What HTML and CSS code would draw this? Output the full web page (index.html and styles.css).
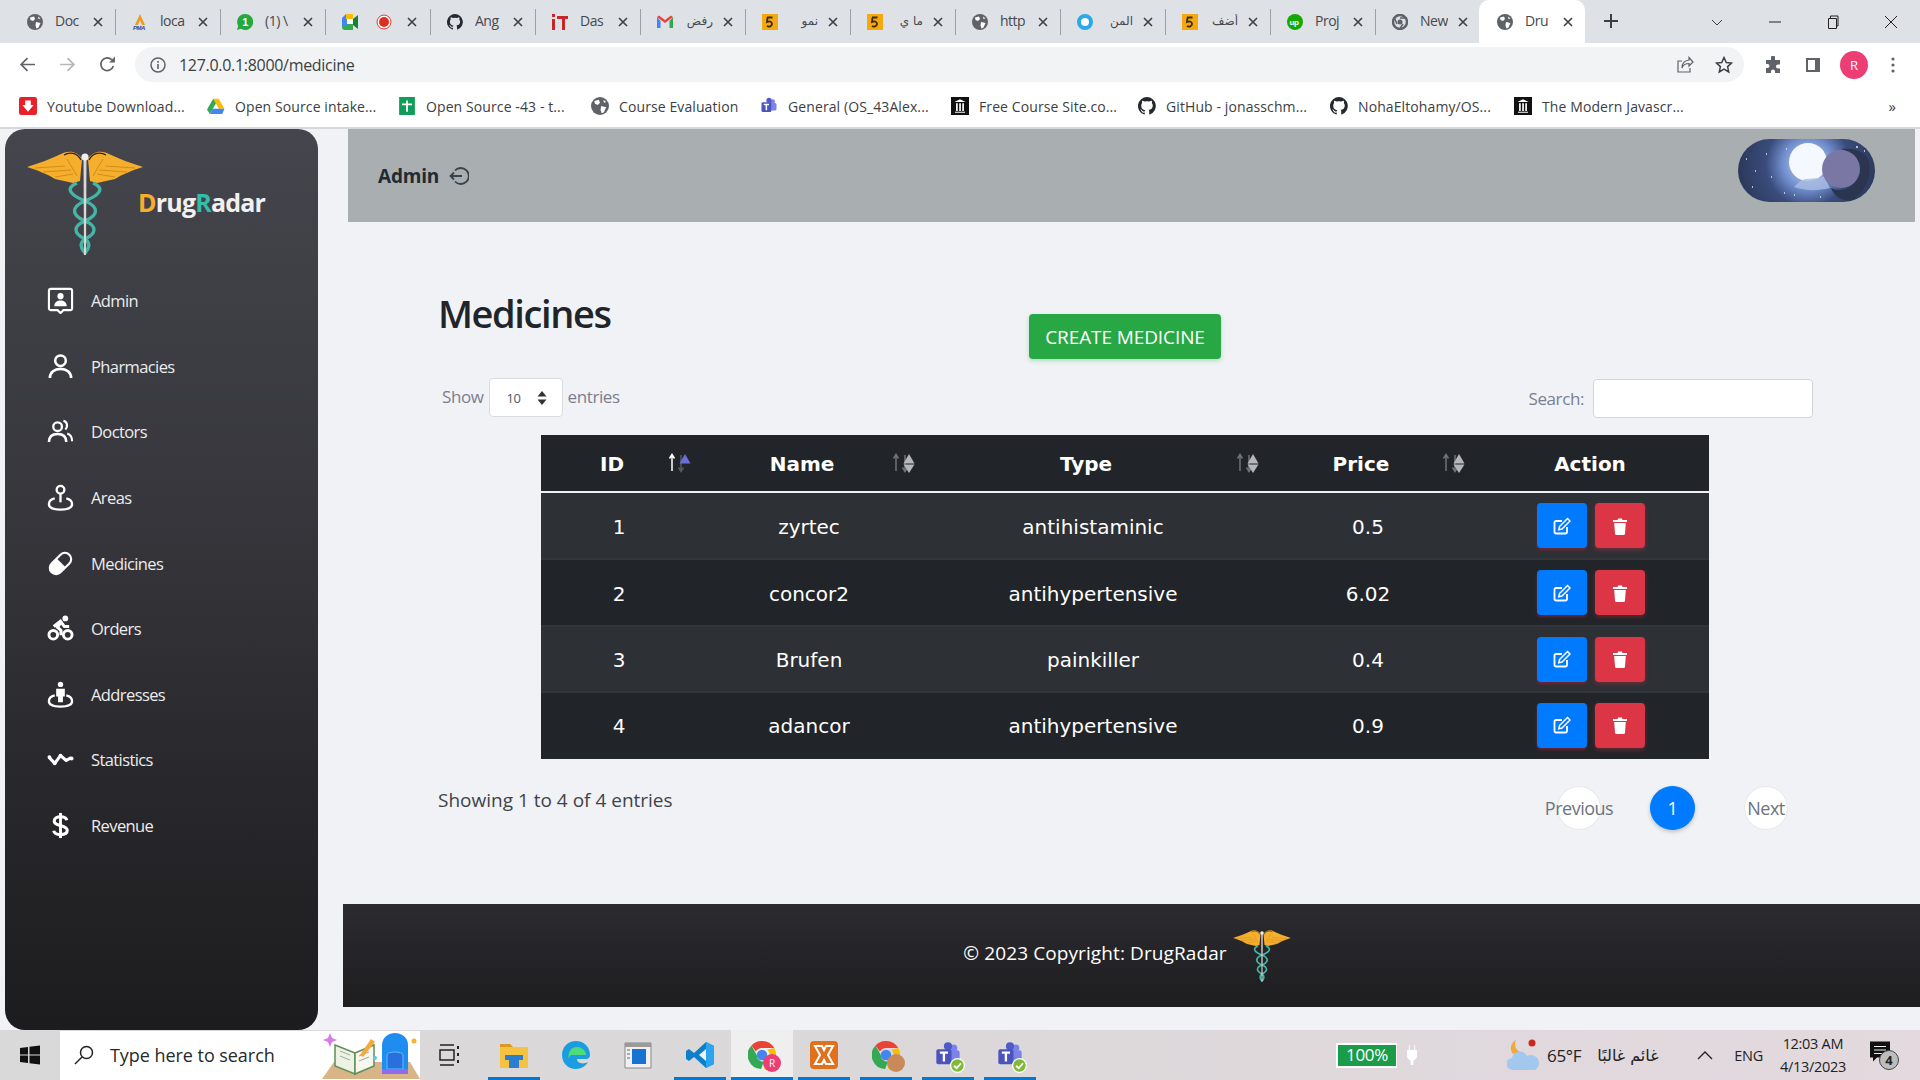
FILE: index.html
```html
<!DOCTYPE html>
<html lang="en">
<head>
    <meta charset="UTF-8">
    <title>DrugRadar</title>
    <link rel="stylesheet" href="styles.css">
</head>
<body>
    <svg class="defs" width="0" height="0">
        <symbol id="globe" viewBox="0 0 16 16">
            <circle cx="8" cy="8" r="8" fill="#5f6368"/>
            <path d="M3 3.500 7 2.500 8 5 6 7 3.500 6ZM9 8l4.500 1-2 4.500-2 1-1-3ZM11 2.500l2.500 2-2 .5Z" fill="#fff"/>
        </symbol>
        <symbol id="close-x" viewBox="0 0 10 10">
            <path d="M1 1l8 8M9 1l-8 8" stroke="#3c4043" stroke-width="1.600" fill="none"/>
        </symbol>
        <symbol id="five" viewBox="0 0 16 16">
            <rect width="16" height="16" fill="#f5a80f"/>
            <path d="M5 3.500h5.500M5.500 3.500 5 8c3-1.500 5 0 5 2s-3 3.500-5 2" stroke="#3a2c05" stroke-width="1.800" fill="none"/>
        </symbol>
        <symbol id="octocat" viewBox="0 0 16 16">
            <path d="M8 0a8 8 0 0 0-2.500 15.600c.4.1.5-.2.5-.4v-1.400c-2.200.5-2.700-1-2.700-1-.4-.9-.9-1.200-.9-1.200-.7-.5.100-.5.100-.5.800.1 1.200.8 1.200.8.700 1.200 1.900.9 2.300.7.100-.5.300-.9.500-1.100-1.800-.2-3.600-.9-3.600-4 0-.9.300-1.600.8-2.100-.1-.2-.4-1 .1-2.100 0 0 .7-.2 2.200.8a7.500 7.500 0 0 1 4 0c1.500-1 2.200-.8 2.200-.8.400 1.100.2 1.900.1 2.100.5.600.8 1.300.8 2.100 0 3.100-1.900 3.700-3.700 3.900.3.300.6.700.6 1.500v2.200c0 .2.100.5.600.4A8 8 0 0 0 8 0Z" fill="#24292f"/>
        </symbol>
        <symbol id="library" viewBox="0 0 16 16">
            <rect width="16" height="16" fill="#111"/>
            <path d="M3 4.500 8 2l5 2.500ZM3.500 13h9v1h-9ZM4.500 5.500h1.500v7H4.500ZM7.300 5.500h1.500v7H7.300ZM10 5.500h1.500v7H10Z" fill="#fff"/>
        </symbol>
        <symbol id="chrome" viewBox="0 0 16 16">
            <path d="M8 0a8 8 0 0 1 7 4H8a4 4 0 0 0-3.500 2L2 2.500A8 8 0 0 1 8 0Z" fill="#ea4335"/>
            <path d="M15 4a8 8 0 0 1-6 12l2.500-5.500A4 4 0 0 0 11 5Z" fill="#fbbc04"/>
            <path d="M2 2.500 5 8a4 4 0 0 0 4 3.900L7.500 16A8 8 0 0 1 2 2.500Z" fill="#34a853"/>
            <circle cx="8" cy="8" r="3" fill="#4285f4"/>
        </symbol>
        <symbol id="teams" viewBox="0 0 24 24">
            <circle cx="17" cy="6" r="3" fill="#7b83eb"/>
            <circle cx="12" cy="4.500" r="3.500" fill="#5059c9"/>
            <rect x="10" y="8" width="12" height="10" rx="2" fill="#7b83eb"/>
            <rect x="2" y="7" width="13" height="13" rx="1.500" fill="#4b53bc"/>
            <path d="M5 10h7M8.500 10v7.500" stroke="#fff" stroke-width="2"/>
        </symbol>
        <symbol id="check-badge" viewBox="0 0 12 12">
            <circle cx="6" cy="6" r="6" fill="#fff"/>
            <circle cx="6" cy="6" r="5" fill="#7fba3a"/>
            <path d="M3.300 6.200 5.300 8.200 8.800 4.200" stroke="#fff" stroke-width="1.500" fill="none"/>
        </symbol>
        <symbol id="caduceus" viewBox="0 0 116 104">
            <path d="M55 8C50 0 42-1 34 3 24 8 12 12 0 16c10 3 22 8 28 12l18 4 7-2Z" fill="#f6ae2d"/>
            <path d="M61 8c5-8 13-9 21-5 10 5 22 9 34 13-10 3-22 8-28 12l-18 4-7-2Z" fill="#f6ae2d"/>
            <path d="M54 9c-4-8-12-8-17-5M62 9c4-8 12-8 17-5" stroke="#2b2115" stroke-width="1.200" fill="none"/>
            <path d="M8 17l30-2M16 21l28-2M28 26l18-3M108 17l-30-2M100 21l-28-2M88 26l-18-3M40 8l10 17M76 8 66 25" stroke="#c98a1a" stroke-width=".9" fill="none"/>
            <path d="M50 32C36 38 46 45 58 50c14 6 14 14 0 20-12 5-12 12 0 18 6 4 4 10 0 14" stroke="#45b5a6" stroke-width="3.400" fill="none"/>
            <path d="M66 32c14 6 4 13-8 18-14 6-14 14 0 20 12 5 12 12 0 18-6 4-4 10 0 14" stroke="#45b5a6" stroke-width="3.400" fill="none"/>
            <path d="M56.500 6h3l-.5 98h-2Z" fill="#d8d8d8"/>
            <circle cx="58" cy="6" r="3.600" fill="#eee"/>
        </symbol>
        <symbol id="sort" viewBox="0 0 23 21">
            <path d="M4 18V2M1.500 5.500 4 1.500 6.500 5.500" class="sort-up" fill="none" stroke-width="1.500"/>
            <path d="M13 2v16M10.500 14.500 13 18.500 15.500 14.500" class="sort-down" fill="none" stroke-width="1.500"/>
            <path d="M17 1l5.500 9.500h-11Z" class="sort-tri-up"/>
            <path d="M17 20l5.500-8.500h-11Z" class="sort-tri-down"/>
        </symbol>
        <symbol id="edit" viewBox="0 0 18 18">
            <path d="M14 10v5a1.500 1.500 0 0 1-1.500 1.500H3A1.500 1.500 0 0 1 1.500 15V5.500A1.500 1.500 0 0 1 3 4h6" stroke="#fff" stroke-width="1.800" fill="none"/>
            <path d="M14.500 1.500 17 4 9 12l-3.200.7L6.500 9.500Z" stroke="#fff" stroke-width="1.500" fill="none"/>
        </symbol>
        <symbol id="trash" viewBox="0 0 16 18">
            <path d="M1 3h4.500l.7-1.500h3.600l.7 1.500H15v2H1ZM2.200 6h11.600l-.8 10.500a1.500 1.500 0 0 1-1.500 1.500H4.500A1.500 1.500 0 0 1 3 16.500Z" fill="#fff"/>
        </symbol>
    </svg>

    <div class="tabstrip">
        <div class="tab"><svg class="fav"><use href="#globe"/></svg><span class="tab-title">Doc</span><svg class="tab-x"><use href="#close-x"/></svg></div>
        <div class="tab"><svg class="fav" viewBox="0 0 16 16"><path d="M8 0 3 11h3l2-5 2 5h3Z" fill="#f09a1d"/><text x="1" y="16" class="pma">PMA</text></svg><span class="tab-title">loca</span><svg class="tab-x"><use href="#close-x"/></svg></div>
        <div class="tab"><svg class="fav" viewBox="0 0 16 16"><path d="M8 0a8 8 0 0 0-6.800 12L0 16l4-1.200A8 8 0 1 0 8 0Z" fill="#25a83d"/><text x="5.200" y="11.500" class="wa">1</text></svg><span class="tab-title">(1) \</span><svg class="tab-x"><use href="#close-x"/></svg></div>
        <div class="tab"><svg class="fav" viewBox="0 0 16 16"><path d="M0 4 4 0h7v5H5v6H0Z" fill="#4285f4"/><path d="M4 0h7v5H4Z" fill="#fbbc04"/><path d="M0 11h5v-1h6v6H3a3 3 0 0 1-3-3Z" fill="#34a853"/><path d="M11 5l5-4v14l-5-4Z" fill="#188038"/><path d="M5 5h6v5H5Z" fill="#fff"/></svg><svg class="rec" viewBox="0 0 16 16"><circle cx="8" cy="8" r="7.500" fill="#fff"/><circle cx="8" cy="8" r="7" fill="none" stroke="#d93025"/><circle cx="8" cy="8" r="5" fill="#d93025"/></svg><span class="tab-title"></span><svg class="tab-x"><use href="#close-x"/></svg></div>
        <div class="tab"><svg class="fav"><use href="#octocat"/></svg><span class="tab-title">Ang</span><svg class="tab-x"><use href="#close-x"/></svg></div>
        <div class="tab"><svg class="fav" viewBox="0 0 16 16"><path d="M0 0h3v3H0ZM0 5h3v11H0ZM5 2h11v3h-3v11h-3V5H5Z" fill="#c62828"/></svg><span class="tab-title">Das</span><svg class="tab-x"><use href="#close-x"/></svg></div>
        <div class="tab"><svg class="fav" viewBox="0 0 16 16"><path d="M0 3v11h3.500V7L0 3Z" fill="#4285f4"/><path d="M16 3v11h-3.500V7Z" fill="#34a853"/><path d="M0 3l8 6 8-6-2-1.500L8 6 2 1.500Z" fill="#ea4335"/></svg><span class="tab-title ar">رفض</span><svg class="tab-x"><use href="#close-x"/></svg></div>
        <div class="tab"><svg class="fav"><use href="#five"/></svg><span class="tab-title ar">نمو</span><svg class="tab-x"><use href="#close-x"/></svg></div>
        <div class="tab"><svg class="fav"><use href="#five"/></svg><span class="tab-title ar">ما ي</span><svg class="tab-x"><use href="#close-x"/></svg></div>
        <div class="tab"><svg class="fav"><use href="#globe"/></svg><span class="tab-title">http</span><svg class="tab-x"><use href="#close-x"/></svg></div>
        <div class="tab"><svg class="fav" viewBox="0 0 16 16"><circle cx="8" cy="8" r="6" fill="#fff" stroke="#29a9e8" stroke-width="4"/></svg><span class="tab-title ar">المن</span><svg class="tab-x"><use href="#close-x"/></svg></div>
        <div class="tab"><svg class="fav"><use href="#five"/></svg><span class="tab-title ar">أضف</span><svg class="tab-x"><use href="#close-x"/></svg></div>
        <div class="tab"><svg class="fav" viewBox="0 0 16 16"><circle cx="8" cy="8" r="8" fill="#14a800"/><text x="2.600" y="10.500" class="up">up</text></svg><span class="tab-title">Proj</span><svg class="tab-x"><use href="#close-x"/></svg></div>
        <div class="tab tab-last"><svg class="fav" viewBox="0 0 16 16"><circle cx="8" cy="8" r="7" fill="none" stroke="#5f6368" stroke-width="2.500"/><circle cx="8" cy="8" r="2.500" fill="#5f6368"/><path d="M8 4h7M5 10 2 3M11 10l-4 6" stroke="#5f6368" stroke-width="1.500"/></svg><span class="tab-title">New</span><svg class="tab-x"><use href="#close-x"/></svg></div>
        <div class="tab tab-active"><svg class="fav"><use href="#globe"/></svg><span class="tab-title">Dru</span><svg class="tab-x"><use href="#close-x"/></svg></div>
        <svg class="tab-new" viewBox="0 0 14 14"><path d="M7 0v14M0 7h14" stroke="#3c4043" stroke-width="2"/></svg>
        <div class="win-controls">
            <svg width="14" height="14" viewBox="0 0 14 14"><path d="M2 5l5 5 5-5" stroke="#3c4043" fill="none"/></svg>
            <svg width="14" height="14" viewBox="0 0 14 14"><path d="M1 7h12" stroke="#222"/></svg>
            <svg width="14" height="14" viewBox="0 0 14 14"><path d="M2.500 3.500h8v10h-8ZM4.500 3.500V1h7.500v10h-1.500" stroke="#222" fill="none"/></svg>
            <svg width="14" height="14" viewBox="0 0 14 14"><path d="M1 1l12 12M13 1 1 13" stroke="#222" fill="none"/></svg>
        </div>
    </div>

    <div class="toolbar">
        <svg class="nav-icon" viewBox="0 0 16 16"><path d="M15 8H2M8 2 2 8l6 6" stroke="#5f6368" stroke-width="1.600" fill="none"/></svg>
        <svg class="nav-icon" viewBox="0 0 16 16"><path d="M1 8h13M8 2l6 6-6 6" stroke="#b4b6b9" stroke-width="1.600" fill="none"/></svg>
        <svg class="nav-icon" viewBox="0 0 16 16"><path d="M13.500 9.500A6 6 0 1 1 12 3.500" stroke="#5f6368" stroke-width="1.600" fill="none"/><path d="M9.500 6H15V.5Z" fill="#5f6368"/></svg>
        <div class="omnibox">
            <svg class="info" viewBox="0 0 16 16"><circle cx="8" cy="8" r="7" stroke="#5f6368" stroke-width="1.500" fill="none"/><path d="M8 7v5M8 4v1.800" stroke="#5f6368" stroke-width="1.600"/></svg>
            <span class="url">127.0.0.1:8000/medicine</span>
            <svg class="omni-share" viewBox="0 0 18 18"><path d="M13 1.500 17 6l-4 4V7.500C9 7.500 7 9 6 12c0-5 3-7.500 7-8ZM14 12v4H2V5h4" stroke="#5f6368" stroke-width="1.200" fill="none"/></svg>
            <svg class="omni-star" viewBox="0 0 18 18"><path d="M9 1.500l2.300 5 5.200.6-3.900 3.500 1.100 5.300L9 13.200l-4.700 2.700 1.100-5.300L1.500 7.100l5.200-.6Z" stroke="#3c4043" stroke-width="1.500" fill="none"/></svg>
        </div>
        <svg class="ext" viewBox="0 0 18 18"><path d="M7 1.500a2 2 0 0 1 4 0V4h5v4.500h-2a2 2 0 0 0 0 4h2V17h-5v-1.500a2 2 0 0 0-4 0V17H2v-5h1.500a2 2 0 0 0 0-4H2V4h5Z" fill="#5f6368"/></svg>
        <svg class="side" viewBox="0 0 18 18"><path d="M2 2h14v14H2Z" fill="#5f6368"/><path d="M4 4h7v10H4Z" fill="#fff"/></svg>
        <span class="avatar">R</span>
        <svg class="kebab" viewBox="0 0 4 16"><circle cx="2" cy="2" r="1.600" fill="#5f6368"/><circle cx="2" cy="8" r="1.600" fill="#5f6368"/><circle cx="2" cy="14" r="1.600" fill="#5f6368"/></svg>
    </div>

    <div class="bookmarks">
        <span class="bm bm-1"><svg class="bm-icon" viewBox="0 0 16 16"><rect width="16" height="16" rx="2" fill="#e8202a"/><path d="M5.500 3h5v4H13l-5 6-5-6h2.500Z" fill="#fff"/></svg>Youtube Download...</span>
        <span class="bm bm-2"><svg class="bm-icon" viewBox="0 0 16 16"><path d="M5.500 1.500h5l5 9h-5Z" fill="#fbbc04"/><path d="M5.500 1.500 0 11l2.500 4 5.500-9.500Z" fill="#34a853"/><path d="M2.500 15h11l2-4.500H5Z" fill="#4285f4"/></svg>Open Source intake...</span>
        <span class="bm bm-3"><svg class="bm-icon" viewBox="0 0 16 16"><rect x="1" width="14" height="16" fill="#0f9d58"/><path d="M3.500 6.500h9M8 3v10" stroke="#fff" stroke-width="1.600"/></svg>Open Source -43 - t...</span>
        <span class="bm bm-4"><svg class="bm-icon"><use href="#globe"/></svg>Course Evaluation</span>
        <span class="bm bm-5"><svg class="bm-icon"><use href="#teams"/></svg>General (OS_43Alex...</span>
        <span class="bm bm-6"><svg class="bm-icon"><use href="#library"/></svg>Free Course Site.co...</span>
        <span class="bm bm-7"><svg class="bm-icon"><use href="#octocat"/></svg>GitHub - jonasschm...</span>
        <span class="bm bm-8"><svg class="bm-icon"><use href="#octocat"/></svg>NohaEltohamy/OS...</span>
        <span class="bm bm-9"><svg class="bm-icon"><use href="#library"/></svg>The Modern Javascr...</span>
        <span class="bm-more">»</span>
    </div>

    <div class="app">
        <aside class="sidebar">
            <div class="brand">
                <svg class="brand-logo"><use href="#caduceus"/></svg>
                <span class="brand-name"><span class="c-gold">D</span>rug<span class="c-teal">R</span>adar</span>
            </div>
            <nav class="menu">
                <a class="menu-item"><svg class="menu-icon" viewBox="0 0 28 28"><path d="M4 2h20a2 2 0 0 1 2 2v18a2 2 0 0 1-2 2h-7l-3 3-3-3H4a2 2 0 0 1-2-2V4a2 2 0 0 1 2-2Z" stroke="#fff" stroke-width="2.200" fill="none"/><circle cx="14" cy="9.500" r="3.200" fill="#fff"/><path d="M7.500 20c0-4 3-6 6.500-6s6.500 2 6.500 6Z" fill="#fff"/></svg>Admin</a>
                <a class="menu-item"><svg class="menu-icon" viewBox="0 0 28 28"><circle cx="14" cy="8" r="5.500" stroke="#fff" stroke-width="2.600" fill="none"/><path d="M3 26c0-6 5-9.500 11-9.500S25 20 25 26" stroke="#fff" stroke-width="2.800" fill="none"/></svg>Pharmacies</a>
                <a class="menu-item"><svg class="menu-icon" viewBox="0 0 28 28"><circle cx="11" cy="9" r="4.500" stroke="#fff" stroke-width="2.400" fill="none"/><path d="M2 25c0-6 4-8.500 9-8.500s9 2.500 9 8.500" stroke="#fff" stroke-width="2.600" fill="none"/><path d="M17 3c4 .5 5 6 2 9M21 16c3 1 5 4 5 8" stroke="#fff" stroke-width="2.200" fill="none"/></svg>Doctors</a>
                <a class="menu-item"><svg class="menu-icon" viewBox="0 0 28 28"><circle cx="14" cy="6" r="4" stroke="#fff" stroke-width="2.400" fill="none"/><path d="M14 10v9" stroke="#fff" stroke-width="2.400"/><path d="M8 15c-4 1-6 3-6 6 0 3.500 5 5.500 12 5.500s12-2 12-5.500c0-3-2-5-6-6" stroke="#fff" stroke-width="2.400" fill="none"/></svg>Areas</a>
                <a class="menu-item"><svg class="menu-icon" viewBox="0 0 28 28"><g transform="rotate(-45 14 14)"><rect x="1" y="7.500" width="26" height="13" rx="6.500" stroke="#fff" stroke-width="2.200" fill="none"/><path d="M7.500 7.500H15v13H7.500a6.500 6.500 0 0 1 0-13Z" fill="#fff"/></g></svg>Medicines</a>
                <a class="menu-item"><svg class="menu-icon" viewBox="0 0 28 28"><circle cx="6.500" cy="20.500" r="4.500" stroke="#fff" stroke-width="3" fill="none"/><circle cx="21.500" cy="20.500" r="4.500" stroke="#fff" stroke-width="3" fill="none"/><circle cx="19" cy="3.500" r="3" fill="#fff"/><path d="M7 12l7-5.500 4 5.500h5M14 8l-3 5 3.500 3v5" stroke="#fff" stroke-width="3.200" fill="none"/></svg>Orders</a>
                <a class="menu-item"><svg class="menu-icon" viewBox="0 0 28 28"><circle cx="14" cy="3.500" r="2.800" fill="#fff"/><path d="M9.500 8h9v8h-2v6h-5v-6h-2Z" fill="#fff"/><path d="M8 15c-4 1-6 3-6 6 0 3.500 5 5.500 12 5.500s12-2 12-5.500c0-3-2-5-6-6" stroke="#fff" stroke-width="2.400" fill="none"/></svg>Addresses</a>
                <a class="menu-item"><svg class="menu-icon" viewBox="0 0 28 28"><path d="M2 11.500 8 18l6-8 6 5 5-3" stroke="#fff" stroke-width="3.200" fill="none" stroke-linejoin="round"/><circle cx="2.500" cy="11.500" r="2" fill="#fff"/><circle cx="8" cy="18" r="2" fill="#fff"/><circle cx="14" cy="10" r="2" fill="#fff"/><circle cx="25.500" cy="13" r="2" fill="#fff"/></svg>Statistics</a>
                <a class="menu-item"><svg class="menu-icon" viewBox="0 0 28 28"><path d="M20.500 8.500C20 6 17.500 5 14 5S7.500 6.500 7.500 9.500 10.500 13 14 14s7 2 7 5-3 4.500-7 4.500S7.500 22 7 19.500" stroke="#fff" stroke-width="3.200" fill="none"/><path d="M14 1v26" stroke="#fff" stroke-width="3"/></svg>Revenue</a>
            </nav>
        </aside>

        <main class="main">
            <header class="topbar">
                <span class="topbar-user">Admin</span>
                <svg class="logout" viewBox="0 0 20 20"><path d="M6 4.500A8 8 0 1 1 6 15.500" stroke="#37424a" stroke-width="1.800" fill="none"/><path d="M13 10H1.500M5 6.500 1.500 10 5 13.500" stroke="#37424a" stroke-width="1.800" fill="none"/></svg>
                <svg class="toggle" viewBox="0 0 137 63">
                    <defs>
                        <radialGradient id="sky" gradientUnits="userSpaceOnUse" cx="70" cy="25" r="68">
                            <stop offset="0" stop-color="#cfe0fb"/>
                            <stop offset=".38" stop-color="#6f8ccb"/>
                            <stop offset=".62" stop-color="#3a4c7c"/>
                            <stop offset="1" stop-color="#2c3a5e"/>
                        </radialGradient>
                    </defs>
                    <rect width="137" height="63" rx="31.500" fill="url(#sky)"/>
                    <circle cx="70" cy="23" r="19" fill="#f5f8ff"/>
                    <path d="M62 42c8-4 16-1 24-5l6 12c-12 3-24 3-36-1Z" fill="#a9bde4" opacity=".8"/>
                    <path d="M8 20h1M17 32h1M14 48h1M28 15h1M33 38h1M46 54h1M56 56h1M118 8h2M126 12h1M82 58h1M48 10h1" stroke="#dfe8fb" stroke-width="1.500"/>
                    <path d="M104 10c8-1 22 0 27 12 3 12-2 30-16 39-12 3-20-6-22-12 8 4 18 2 24-6 6-10 0-25-13-33Z" fill="#2c3550"/>
                    <circle cx="103" cy="30" r="19" fill="#7a77a5"/>
                </svg>
            </header>

            <section class="content">
                <div class="title-row">
                    <h1 class="page-title">Medicines</h1>
                    <button class="btn-create">CREATE MEDICINE</button>
                </div>

                <div class="controls">
                    <label class="length">Show
                        <span class="select-box">10<svg class="select-arrows" viewBox="0 0 10 14"><path d="M5 0l4.500 5.500h-9ZM5 14 .5 8.500h9Z" fill="#333"/></svg></span>
                        entries</label>
                    <label class="search">Search: <input class="search-input" type="text"></label>
                </div>

                <table class="med-table">
                    <colgroup>
                        <col class="col-id"><col class="col-name"><col class="col-type"><col class="col-price"><col class="col-action">
                    </colgroup>
                    <thead>
                        <tr>
                            <th>ID<svg class="sort sort-active"><use href="#sort"/></svg></th>
                            <th>Name<svg class="sort"><use href="#sort"/></svg></th>
                            <th>Type<svg class="sort"><use href="#sort"/></svg></th>
                            <th>Price<svg class="sort"><use href="#sort"/></svg></th>
                            <th class="th-action">Action</th>
                        </tr>
                    </thead>
                    <tbody>
                        <tr class="row-odd"><td>1</td><td>zyrtec</td><td>antihistaminic</td><td>0.5</td>
                            <td><div class="actions"><a class="btn-act btn-edit"><svg><use href="#edit"/></svg></a><a class="btn-act btn-del"><svg><use href="#trash"/></svg></a></div></td></tr>
                        <tr><td>2</td><td>concor2</td><td>antihypertensive</td><td>6.02</td>
                            <td><div class="actions"><a class="btn-act btn-edit"><svg><use href="#edit"/></svg></a><a class="btn-act btn-del"><svg><use href="#trash"/></svg></a></div></td></tr>
                        <tr class="row-odd row-short"><td>3</td><td>Brufen</td><td>painkiller</td><td>0.4</td>
                            <td><div class="actions"><a class="btn-act btn-edit"><svg><use href="#edit"/></svg></a><a class="btn-act btn-del"><svg><use href="#trash"/></svg></a></div></td></tr>
                        <tr><td>4</td><td>adancor</td><td>antihypertensive</td><td>0.9</td>
                            <td><div class="actions"><a class="btn-act btn-edit"><svg><use href="#edit"/></svg></a><a class="btn-act btn-del"><svg><use href="#trash"/></svg></a></div></td></tr>
                    </tbody>
                </table>

                <div class="table-foot">
                    <span class="info-text">Showing 1 to 4 of 4 entries</span>
                    <div class="pager">
                        <a class="page-btn">Previous</a>
                        <a class="page-btn page-current">1</a>
                        <a class="page-btn">Next</a>
                    </div>
                </div>
            </section>

            <footer class="footer">
                <span class="footer-text">© 2023 Copyright: DrugRadar</span>
                <svg class="footer-logo"><use href="#caduceus"/></svg>
            </footer>
        </main>
    </div>

    <div class="taskbar">
        <svg class="win-logo" viewBox="0 0 20 20"><path d="M0 3l8-1v7.500H0ZM9.500 1.800 20 .5v9H9.500ZM0 10.500h8V18l-8-1ZM9.500 10.500H20v9l-10.500-1.300Z" fill="#111"/></svg>
        <div class="task-search">
            <svg class="search-glass" viewBox="0 0 20 20"><circle cx="12.500" cy="7.500" r="6" stroke="#222" stroke-width="1.500" fill="none"/><path d="M8 12 1 19" stroke="#222" stroke-width="1.500"/></svg>
            <span class="search-text">Type here to search</span>
            <svg class="search-art" viewBox="0 0 98 48">
                <path d="M0 48 12 31h76l10 17Z" fill="#d8b487"/>
                <path d="M13 14 33 22v21L13 35Z" fill="#eef2e2" stroke="#5f8f5a" stroke-width="1.500"/>
                <path d="M33 22 52 14v21L33 43Z" fill="#f7f7ee" stroke="#5f8f5a" stroke-width="1.500"/>
                <path d="M18 20l10 4M18 25l10 4M37 25l10-4M37 30l10-4" stroke="#9aa" />
                <path d="M38 24 49 8l4 3-12 15Z" fill="#f3a93b"/>
                <path d="M60 14c0-8 7-12 13-12s13 4 13 12v29H60Z" fill="#1f8df0"/>
                <path d="M65 24c0-4 16-4 16 0v14H65Z" fill="#2a6fe0" stroke="#5ac0f5"/>
                <path d="M60 38h26v5H60Z" fill="#8d6cf0"/>
                <circle cx="92" cy="10" r="2.500" fill="#f5b52d"/>
                <circle cx="53" cy="27" r="2" fill="#5ac8e8"/>
                <path d="M8 2l2 5 5 2-5 2-2 5-2-5-5-2 5-2Z" fill="#d77be8"/>
            </svg>
        </div>
        <svg class="task-view" viewBox="0 0 22 22"><path d="M1 1h14M1 21h14M1 6h14v10H1Z" stroke="#222" stroke-width="1.500" fill="none"/><path d="M19 2v3M19 9v3M19 16v3" stroke="#222" stroke-width="2"/></svg>
        <div class="task-apps">
            <span class="app-slot app-run"><svg viewBox="0 0 28 28"><path d="M0 3h10l3 3h15v21H0Z" fill="#f5c242"/><path d="M0 3h10l3 3H0Z" fill="#d99a22"/><path d="M9 27v-8h10v8" fill="#2a7fd0"/><path d="M5 14h18v5H5Z" fill="#2a7fd0"/></svg></span>
            <span class="app-slot"><svg viewBox="0 0 28 28"><path d="M14 0c8 0 14 6 14 14 0 2-1 4-4 4h-9c0 4 6 6 11 3-2 4-7 7-12 7C6 28 0 22 0 14S6 0 14 0Z" fill="#1b9de2"/><path d="M7 18c-2-7 3-13 9-12 5 1 8 4 8 8H10c-2 0-3 2-3 4Z" fill="#4fdb7a"/></svg></span>
            <span class="app-slot"><svg viewBox="0 0 28 28"><path d="M1 2h26v25H1Z" fill="#f0f0f0" stroke="#888"/><path d="M1 2h26v4H1Z" fill="#9a9a9a"/><path d="M8 8h14v15H8Z" fill="#1573d2"/><path d="M3 9h3M3 13h3M3 17h3" stroke="#666"/></svg></span>
            <span class="app-slot app-run"><svg viewBox="0 0 28 28"><path d="M20 1 28 5v18l-8 4L8 16l-5 4-3-2V10l3-2 5 4Z" fill="#0d7fcb"/><path d="M20 8v12l-7-6Z" fill="#f0f2f6"/><path d="M20 1l8 4v18l-8 4Z" fill="#2ba5ef"/></svg></span>
            <span class="app-slot app-active app-run"><svg class="app-chrome"><use href="#chrome"/></svg><span class="chrome-badge">R</span></span>
            <span class="app-slot app-run"><svg viewBox="0 0 28 28"><rect width="28" height="28" rx="4" fill="#e2711d"/><path d="M5 5h7l2 4 2-4h7l-5 9 5 9h-7l-2-4-2 4H5l5-9Z" fill="none" stroke="#fff" stroke-width="2"/></svg></span>
            <span class="app-slot app-run"><svg class="app-chrome"><use href="#chrome"/></svg><span class="chrome-badge chrome-badge-photo"></span></span>
            <span class="app-slot app-run"><svg class="app-teams"><use href="#teams"/></svg><svg class="app-check"><use href="#check-badge"/></svg></span>
            <span class="app-slot app-run"><svg class="app-teams"><use href="#teams"/></svg><svg class="app-check"><use href="#check-badge"/></svg></span>
        </div>
        <div class="tray">
            <span class="battery">100%</span>
            <svg class="plug" viewBox="0 0 12 22"><path d="M3 0v6M9 0v6M1 6h10v6a5 5 0 0 1-10 0ZM5 16h2v6H5Z" fill="#fff" stroke="#fff"/></svg>
            <svg class="weather" viewBox="0 0 34 32"><path d="M9 1a9 9 0 0 0 8 13L6 15A9 9 0 0 1 9 1Z" fill="#f2a93b"/><circle cx="25" cy="4" r="3.500" fill="#c8281e"/><path d="M6 31a6 6 0 0 1-1-12 8 8 0 0 1 15-2 7 7 0 0 1 8 14Z" fill="#a3c8ee"/></svg>
            <span class="temp">65°F</span>
            <span class="weather-text">غائم غالبًا</span>
            <svg class="tray-up" viewBox="0 0 16 10"><path d="M1 9l7-7 7 7" stroke="#222" stroke-width="1.400" fill="none"/></svg>
            <span class="lang">ENG</span>
            <div class="clock"><span>12:03 AM</span><span>4/13/2023</span></div>
            <div class="notify">
                <svg class="notify-icon" viewBox="0 0 20 20"><path d="M0 0h20v16H7l-4 4v-4H0Z" fill="#111"/><path d="M4 5h12M4 8.500h12M4 12h8" stroke="#eee" stroke-width="1.200"/></svg>
                <span class="notify-count">4</span>
            </div>
        </div>
    </div>
</body>
</html>
```

FILE: styles.css
```css
* {
    box-sizing: border-box;
}
html, body {
    margin: 0;
    padding: 0;
}
body {
    width: 1920px;
    height: 1080px;
    display: flex;
    flex-direction: column;
    overflow: hidden;
    font-family: "Open Sans", "DejaVu Sans", sans-serif;
    background: #f0f2f6;
    color: #212529;
}
.defs {
    position: absolute;
}

/* browser tabs */
.tabstrip {
    height: 43px;
    flex: none;
    display: flex;
    align-items: stretch;
    padding-left: 11px;
    background: #dee1e6;
}
.tab {
    width: 105px;
    flex: none;
    display: flex;
    align-items: center;
    position: relative;
    padding-left: 16px;
    font-size: 14px;
    letter-spacing: -.5px;
    color: #45494d;
}
.tab::after {
    content: "";
    position: absolute;
    right: 0;
    top: 9px;
    height: 26px;
    border-right: 1px solid #9da1a6;
}
.tab-last::after,
.tab-active::after {
    display: none;
}
.tab-active {
    width: 106px;
    margin-left: -2px;
    padding-left: 18px;
    background: #fff;
    border-radius: 10px 10px 0 0;
}
.fav {
    width: 16px;
    height: 16px;
    flex: none;
}
.rec {
    width: 16px;
    height: 16px;
    flex: none;
    margin-left: 18px;
}
.tab-title {
    width: 28px;
    margin-left: 12px;
    padding-bottom: 2px;
    overflow: hidden;
    white-space: nowrap;
}
.rec + .tab-title {
    width: 0;
    margin-left: 0;
}
.tab-title.ar {
    font-family: "DejaVu Sans", sans-serif;
    font-size: 12px;
    direction: rtl;
}
.tab-x {
    width: 10px;
    height: 10px;
    margin-left: 10px;
    flex: none;
}
.rec ~ .tab-x {
    margin-left: 15px;
}
.pma {
    font: italic bold 6px "Liberation Sans", sans-serif;
    fill: #2c4a9a;
}
.wa {
    font: bold 11px "Liberation Sans", sans-serif;
    fill: #fff;
}
.up {
    font: bold 8px "Liberation Sans", sans-serif;
    fill: #fff;
}
.tab-new {
    width: 14px;
    height: 14px;
    margin: 14px 0 0 19px;
    flex: none;
}
.win-controls {
    margin-left: auto;
    display: flex;
    align-items: center;
    gap: 44px;
    padding-right: 22px;
}

/* address bar */
.toolbar {
    height: 43px;
    flex: none;
    display: flex;
    align-items: center;
    padding-left: 19px;
    background: #fff;
}
.nav-icon {
    width: 17px;
    height: 17px;
    margin-right: 23px;
    flex: none;
}
.nav-icon:nth-child(3) {
    margin-right: 27px;
}
.omnibox {
    width: 1609px;
    height: 35px;
    display: flex;
    align-items: center;
    margin-left: -8px;
    padding-left: 15px;
    background: #f1f3f4;
    border-radius: 18px;
    font-size: 16px;
    letter-spacing: -.3px;
    color: #3c4043;
}
.info {
    width: 16px;
    height: 16px;
    margin-right: 13px;
}
.omni-share {
    width: 18px;
    height: 18px;
    margin-left: auto;
    margin-right: 21px;
}
.omni-star {
    width: 18px;
    height: 18px;
    margin-right: 11px;
}
.ext {
    width: 18px;
    height: 18px;
    margin-left: 20px;
}
.side {
    width: 18px;
    height: 18px;
    margin-left: 22px;
}
.avatar {
    width: 28px;
    height: 28px;
    margin-left: 18px;
    border-radius: 50%;
    background: #ec3d74;
    color: #fff;
    font-size: 13px;
    line-height: 28px;
    text-align: center;
}
.kebab {
    width: 4px;
    height: 16px;
    margin-left: 23px;
}

/* bookmarks */
.bookmarks {
    height: 43px;
    flex: none;
    display: flex;
    align-items: center;
    padding-bottom: 1px;
    background: #fff;
    border-bottom: 2px solid #d5d7da;
    font-size: 14px;
    letter-spacing: .1px;
    color: #3c4043;
}
.bm {
    display: flex;
    align-items: center;
    flex: none;
    white-space: nowrap;
}
.bm-icon {
    width: 18px;
    height: 18px;
    margin-right: 10px;
    flex: none;
}
.bm-1 { margin-left: 19px; width: 188px; }
.bm-2 { width: 191px; }
.bm-3 { width: 193px; }
.bm-4 { width: 169px; }
.bm-5 { width: 191px; }
.bm-6 { width: 187px; }
.bm-7 { width: 192px; }
.bm-8 { width: 184px; }
.bm-more {
    margin-left: auto;
    margin-right: 24px;
    font-size: 15px;
}

/* page */
.app {
    flex: 1;
    min-height: 0;
    display: flex;
    padding-left: 5px;
}
.sidebar {
    width: 313px;
    flex: none;
    border-radius: 20px;
    background: linear-gradient(180deg, #45454d 0%, #37373d 40%, #1c1c1e 100%);
    color: #f1f1f1;
}
.brand {
    height: 139px;
    display: flex;
    padding: 22px 0 0 22px;
}
.brand-logo {
    width: 116px;
    height: 104px;
    flex: none;
}
.brand-name {
    margin: 34px 0 0 -5px;
    font-size: 25px;
    font-weight: 700;
    letter-spacing: -.8px;
    color: #f0f0f0;
}
.c-gold {
    color: #f6ae2d;
}
.c-teal {
    color: #35bdab;
}
.menu-item {
    height: 65.6px;
    display: flex;
    align-items: center;
    gap: 17px;
    padding-left: 41.5px;
    font-size: 16.500px;
    letter-spacing: -.6px;
    color: #ececec;
}
.menu-icon {
    width: 27px;
    height: 27px;
    flex: none;
    margin-right: .5px;
}
.main {
    flex: 1;
    min-width: 0;
    display: flex;
    flex-direction: column;
    margin-left: 25px;
}
.topbar {
    height: 93px;
    flex: none;
    display: flex;
    align-items: center;
    margin: 0 5px;
    padding: 0 40px 0 30px;
    background: #a9aeb0;
    font-weight: 700;
    font-size: 19px;
    letter-spacing: -.2px;
    color: #1f2a33;
}
.logout {
    width: 20px;
    height: 20px;
    margin-left: 10px;
}
.toggle {
    width: 137px;
    height: 63px;
    margin: 0 0 10px auto;
}
.content {
    flex: 1;
    padding: 67px 107px 0 95px;
}
.title-row {
    display: grid;
    grid-template-columns: 591px auto;
    height: 90px;
}
.page-title {
    margin: 0;
    font-size: 38px;
    font-weight: 600;
    line-height: 48px;
    letter-spacing: -1.400px;
}
.btn-create {
    justify-self: start;
    width: 192px;
    height: 45px;
    margin-top: 25px;
    padding: 0;
    border: 0;
    border-radius: 4px;
    background: #28a745;
    box-shadow: 0 2px 4px rgba(40, 167, 69, .3);
    color: #fff;
    font-family: inherit;
    font-size: 19px;
    letter-spacing: -.1px;
}
.controls {
    height: 56px;
    display: flex;
    justify-content: space-between;
    padding-left: 4px;
    font-size: 17px;
    letter-spacing: -.4px;
    color: #7d7d90;
}
.length {
    display: flex;
    height: 39px;
    align-items: center;
    gap: 5px;
    margin-top: -2px;
}
.select-box {
    width: 74px;
    height: 39px;
    margin-top: 2px;
    display: flex;
    align-items: center;
    justify-content: space-between;
    padding: 0 15px 0 17px;
    background: #fff;
    border: 1px solid #d8dbe0;
    border-radius: 4px;
    font-size: 13px;
    color: #55585c;
}
.select-arrows {
    width: 10px;
    height: 14px;
}
.search {
    display: flex;
    align-items: center;
    height: 39px;
    gap: 9px;
}
.search-input {
    width: 220px;
    height: 39px;
    background: #fff;
    border: 1px solid #d2d5da;
    border-radius: 4px;
}
.med-table {
    width: 1168px;
    margin-left: 103px;
    border-collapse: collapse;
    table-layout: fixed;
    background: #212529;
    color: #fff;
    font-family: "DejaVu Sans", sans-serif;
    font-size: 20px;
}
.col-id { width: 156px; }
.col-name { width: 224px; }
.col-type { width: 344px; }
.col-price { width: 206px; }
.col-action { width: 238px; }
.med-table th {
    height: 57px;
    position: relative;
    padding: 2px 14px 0 0;
    border-bottom: 2px solid #eef0f2;
    font-weight: 700;
    text-align: center;
}
.med-table .th-action {
    padding-right: 0;
}
.med-table td {
    height: 67px;
    padding: 2px 0 0;
    border-bottom: 2px solid #32353a;
    text-align: center;
}
.med-table td:last-child {
    padding: 0 0 0 2px;
}
.med-table .row-short td {
    height: 66px;
}
.med-table tr:last-child td {
    height: 67px;
    padding-bottom: 2px;
    border-bottom: 0;
}
.row-odd {
    background: #2d3035;
}
.sort {
    position: absolute;
    right: 6px;
    top: 18px;
    width: 23px;
    height: 21px;
}
.sort-up {
    stroke: var(--arrow-up, #6f7276);
}
.sort-down {
    stroke: var(--arrow-down, #6f7276);
}
.sort-tri-up {
    fill: var(--tri-up, #b5b7ba);
}
.sort-tri-down {
    fill: var(--tri-down, #b5b7ba);
}
.sort-active {
    --arrow-up: #fff;
    --arrow-down: #55585c;
    --tri-up: #6c6ed8;
    --tri-down: transparent;
}
.actions {
    display: flex;
    justify-content: center;
    gap: 8px;
}
.btn-act {
    width: 50px;
    height: 45px;
    display: flex;
    align-items: center;
    justify-content: center;
    border-radius: 4px;
}
.btn-act svg {
    width: 18px;
    height: 18px;
}
.btn-edit {
    background: #007bff;
    box-shadow: 0 2px 3px rgba(180, 30, 60, .5);
}
.btn-del {
    background: #dc3545;
    box-shadow: 0 2px 5px rgba(220, 53, 69, .35);
}
.table-foot {
    display: flex;
    justify-content: space-between;
    padding-top: 26px;
    font-size: 19px;
    color: #3f4348;
}
.info-text {
    margin-top: 2px;
}
.pager {
    display: flex;
    gap: 49px;
    margin-top: 1px;
    margin-right: 25px;
    font-size: 18px;
    letter-spacing: -.5px;
}
.page-btn {
    width: 44px;
    height: 44px;
    display: flex;
    align-items: center;
    justify-content: center;
    border-radius: 50%;
    background: #fff;
    border: 1px solid #e6e8ea;
    color: #6c757d;
    white-space: nowrap;
}
.page-current {
    width: 45px;
    background: #007bff;
    border-color: #007bff;
    box-shadow: 0 2px 4px rgba(0, 0, 0, .2);
    color: #fff;
}
.footer {
    height: 103px;
    flex: none;
    margin-bottom: 23px;
    display: flex;
    align-items: center;
    justify-content: center;
    gap: 6px;
    padding-right: 9px;
    background: linear-gradient(180deg, #2b2b30, #1e1e20);
    color: #fff;
    font-size: 19px;
    letter-spacing: .1px;
}
.footer-text {
    padding-bottom: 6px;
}
.footer-logo {
    width: 58px;
    height: 58px;
}

/* windows taskbar */
.taskbar {
    height: 50px;
    flex: none;
    display: flex;
    align-items: center;
    background: linear-gradient(90deg, #d9d9d9 0%, #dcd8da 50%, #e3d9de 100%);
}
.win-logo {
    width: 20px;
    height: 20px;
    margin-left: 20px;
    flex: none;
}
.task-search {
    width: 360px;
    height: 49px;
    margin-left: 20px;
    display: flex;
    align-items: center;
    background: #fff;
    font-size: 18px;
    letter-spacing: -.05px;
    color: #26292c;
    flex: none;
}
.search-glass {
    width: 20px;
    height: 20px;
    margin-left: 14px;
    flex: none;
}
.search-text {
    margin-left: 16px;
    white-space: nowrap;
}
.search-art {
    width: 98px;
    height: 48px;
    margin-left: auto;
    flex: none;
}
.task-view {
    width: 22px;
    height: 22px;
    margin-left: 19px;
    flex: none;
}
.task-apps {
    display: flex;
    margin-left: 22px;
    align-self: stretch;
    flex: none;
}
.app-slot {
    width: 62px;
    position: relative;
    display: flex;
    align-items: center;
    justify-content: center;
}
.app-slot > svg {
    width: 28px;
    height: 28px;
}
.app-run::after {
    content: "";
    position: absolute;
    left: 5px;
    right: 5px;
    bottom: 0;
    height: 3px;
    background: #0078d4;
}
.app-active {
    background: #efeff0;
}
.app-active::after {
    left: 0;
    right: 0;
}
.chrome-badge {
    position: absolute;
    left: 32px;
    top: 24px;
    width: 18px;
    height: 18px;
    border-radius: 50%;
    background: #ec3d74;
    color: #fff;
    font-size: 10px;
    line-height: 18px;
    text-align: center;
}
.chrome-badge-photo {
    background: #c98a5a;
}
.app-slot > .app-check {
    position: absolute;
    left: 33px;
    top: 28px;
    width: 15px;
    height: 15px;
}
.tray {
    flex: 1;
    position: relative;
    display: flex;
    align-items: center;
    font-size: 15px;
    letter-spacing: -.3px;
    color: #222;
}
.battery {
    margin-left: 295px;
    width: 61px;
    height: 25px;
    background: #1a9c4b;
    border: 2px solid #fff;
    border-right-width: 1px;
    color: #fff;
    font-size: 17px;
    line-height: 20px;
    text-align: center;
}
.plug {
    width: 12px;
    height: 20px;
    margin-left: 9px;
}
.weather {
    width: 34px;
    height: 32px;
    margin-left: 89px;
}
.temp {
    margin-left: 6px;
    font-size: 17px;
}
.weather-text {
    width: 70px;
    margin-left: 16px;
    font-family: "DejaVu Sans", sans-serif;
    font-size: 16px;
    white-space: nowrap;
}
.tray-up {
    width: 16px;
    height: 10px;
    margin-left: 30px;
}
.lang {
    margin-left: 21px;
    font-size: 14.500px;
}
.clock {
    display: flex;
    flex-direction: column;
    align-items: center;
    gap: 4px;
    margin-left: 17px;
    font-size: 14.500px;
    line-height: 19px;
}
.notify {
    position: relative;
    width: 30px;
    height: 36px;
    margin-left: 24px;
}
.notify-icon {
    width: 20px;
    height: 25px;
    position: absolute;
    left: 0;
    top: 2px;
}
.notify-count {
    position: absolute;
    left: 9px;
    top: 13px;
    width: 20px;
    height: 20px;
    border-radius: 50%;
    background: #bdbdbd;
    border: 1px solid #444;
    font-size: 13px;
    font-weight: 700;
    line-height: 18px;
    text-align: center;
}
```
